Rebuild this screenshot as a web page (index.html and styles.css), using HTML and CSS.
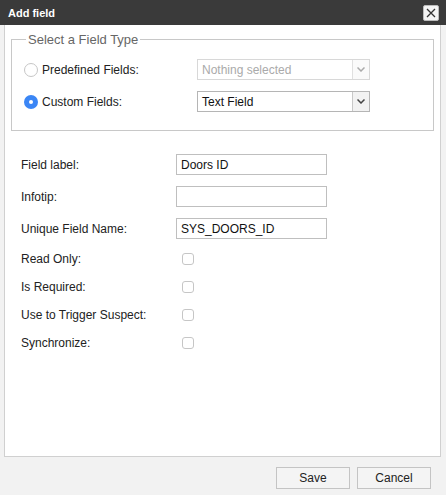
FILE: index.html
```html
<!DOCTYPE html>
<html>
<head>
<meta charset="utf-8">
<link rel="stylesheet" href="styles.css">
</head>
<body>
<div class="dialog">
  <div class="titlebar">
    <span class="title">Add field</span>
    <button class="close" aria-label="Close">
      <svg width="10" height="10" viewBox="0 0 10 10"><path d="M1 1L9 9M9 1L1 9" stroke="#333" stroke-width="1.3" fill="none"/></svg>
    </button>
  </div>
  <div class="panel">
    <fieldset class="ftype">
      <legend>Select a Field Type</legend>
      <div class="trow">
        <label class="radio"><span class="rdot"></span>Predefined Fields:</label>
        <div class="select disabled"><span>Nothing selected</span><span class="arrow"><svg width="8" height="5" viewBox="0 0 8 5"><path d="M0.5 0.5L4 4L7.5 0.5" stroke="#aaa" stroke-width="1.5" fill="none"/></svg></span></div>
      </div>
      <div class="trow">
        <label class="radio"><span class="rdot on"></span>Custom Fields:</label>
        <div class="select"><span>Text Field</span><span class="arrow"><svg width="8" height="5" viewBox="0 0 8 5"><path d="M0.5 0.5L4 4L7.5 0.5" stroke="#444" stroke-width="1.5" fill="none"/></svg></span></div>
      </div>
    </fieldset>
    <div class="form">
      <div class="frow"><span class="lbl">Field label:</span><div class="input">Doors ID</div></div>
      <div class="frow"><span class="lbl">Infotip:</span><div class="input"></div></div>
      <div class="frow"><span class="lbl">Unique Field Name:</span><div class="input">SYS_DOORS_ID</div></div>
      <div class="crow"><span class="lbl">Read Only:</span><span class="cb"></span></div>
      <div class="crow"><span class="lbl">Is Required:</span><span class="cb"></span></div>
      <div class="crow"><span class="lbl">Use to Trigger Suspect:</span><span class="cb"></span></div>
      <div class="crow"><span class="lbl">Synchronize:</span><span class="cb"></span></div>
    </div>
  </div>
  <div class="footer">
    <button class="btn">Save</button>
    <button class="btn">Cancel</button>
  </div>
</div>
</body>
</html>
```
FILE: styles.css
```css
* { box-sizing: border-box; }
html, body { margin: 0; padding: 0; }
body { font-family: "Liberation Sans", Arial, sans-serif; font-size: 12px; color: #222; background: #f2f2f2; }
.dialog { width: 446px; height: 495px; display: flex; flex-direction: column; background: #f2f2f2; }
.titlebar { height: 25px; background: #3a3a3a; display: flex; align-items: center; justify-content: space-between; padding: 0 7px 0 8px; }
.title { color: #fff; font-weight: bold; font-size: 11px; }
.close { width: 16px; height: 16px; padding: 0; border: 1px solid #bbb; border-radius: 2px; background: #f4f4f4; display: flex; align-items: center; justify-content: center; margin-top: 1px; }
.panel { margin: 0 5px 0 4px; height: 432px; background: #fff; border: 1px solid #d0d0d0; border-top: none; padding: 7px 6px 0 6px; }
.ftype { margin: 0; border: 1px solid #c8c8c8; padding: 2px 0 0 12px; height: 99px; }
.ftype legend { color: #666; font-size: 13px; padding: 0 2px; margin-left: 2px; }
.trow { display: flex; align-items: center; height: 21px; }
.trow:first-of-type { margin-top: 10px; }
.trow + .trow { margin-top: 11px; }
.radio { width: 173px; display: flex; align-items: center; gap: 4px; font-size: 12px; color: #222; }
.rdot { width: 14px; height: 14px; border-radius: 50%; border: 1px solid #c6c6c6; background: #fff; display: inline-block; position: relative; }
.rdot.on { border: none; background: #3b86f5; }
.rdot.on::after { content: ""; position: absolute; left: 5px; top: 5px; width: 4px; height: 4px; border-radius: 50%; background: #fff; }
.select { width: 173px; height: 21px; border: 1px solid #b5b5b5; display: flex; align-items: stretch; font-size: 12px; }
.select > span:first-child { flex: 1; padding-left: 4px; display: flex; align-items: center; color: #111; }
.select .arrow { width: 17px; border-left: 1px solid #c8c8c8; background: #f2f2f2; display: flex; align-items: center; justify-content: center; }
.select.disabled { border-color: #d8d8d8; }
.select.disabled > span:first-child { color: #aaa; }
.select.disabled .arrow { background: #fafafa; border-left-color: #e0e0e0; }
.form { padding: 23px 0 0 10px; }
.frow { display: flex; align-items: center; height: 21px; margin-bottom: 11px; }
.lbl { width: 155px; color: #222; font-size: 12px; }
.input { width: 151px; height: 21px; border: 1px solid #bfbfbf; padding: 0 4px; display: flex; align-items: center; color: #111; }
.crow { display: flex; align-items: center; height: 17px; margin-bottom: 11px; }
.frow + .crow { margin-top: 0; }
.cb { width: 12px; height: 12px; border: 1px solid #c6c6c6; border-radius: 3px; background: #fff; margin-left: 6px; }
.footer { display: flex; justify-content: flex-end; gap: 7px; padding: 10px 15px 0 0; }
.btn { width: 74px; height: 22px; border: 1px solid #c4c4c4; background: #f4f4f4; font-family: "Liberation Sans", Arial, sans-serif; font-size: 12px; color: #222; padding: 0; }
```
